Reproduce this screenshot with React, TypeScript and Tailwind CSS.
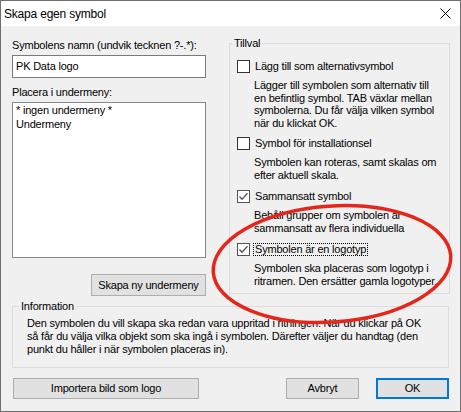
import React from 'react';

const Check = ({ checked }: { checked?: boolean }) => (
  <span
    className={`w-[13px] h-[13px] shrink-0 bg-white border ${checked ? 'border-[#555555]' : 'border-[#333333]'} flex items-center justify-center`}
  >
    {checked && (
      <svg width="11" height="11" viewBox="0 0 11 11">
        <polyline points="1.5,5.5 4,8.2 9.5,2.2" fill="none" stroke="#555555" strokeWidth="1.3" />
      </svg>
    )}
  </span>
);

function Option({
  label,
  lines,
  checked,
  focused,
  className,
}: {
  label: string;
  lines: string[];
  checked?: boolean;
  focused?: boolean;
  className?: string;
}) {
  return (
    <div className={className}>
      <div className="flex items-center h-[13px] gap-[3px]">
        <Check checked={checked} />
        <span
          className={`px-[1px] leading-[11px] ${focused ? 'border border-dotted border-black' : 'border border-transparent'}`}
        >
          {label}
        </span>
      </div>
      <div className="ml-[17px] mt-[6px] leading-[12.5px]">
        {lines.map(l => (
          <div key={l}>{l}</div>
        ))}
      </div>
    </div>
  );
}

export default function App() {
  return (
    <div className="relative w-[461px] h-[412px] bg-[#F0F0F0] border border-[#6F6F6F] flex flex-col text-black text-[11px] tracking-[-0.2px] font-['Liberation_Sans',Arial,sans-serif]">
      {/* title bar */}
      <div className="h-[25px] shrink-0 bg-white flex items-center justify-between pl-[3px] pr-[9px]">
        <span className="text-[12px] tracking-[-0.2px]">Skapa egen symbol</span>
        <svg width="11" height="11" viewBox="0 0 11 11">
          <path d="M0.5 0.5 L10.5 10.5 M10.5 0.5 L0.5 10.5" stroke="#000" strokeWidth="1" />
        </svg>
      </div>

      <div className="flex flex-col pl-[11px] pr-[10px]">
        <div className="flex items-start gap-[23px]">
          {/* left column */}
          <div className="w-[194px] mt-[13px] flex flex-col">
            <div className="h-[13px] leading-[13px]">Symbolens namn (undvik tecknen ?-.*):</div>
            <div className="mt-[3px] h-[23px] bg-white border border-[#7A7A7A] flex items-center pl-[3px]">PK Data logo</div>
            <div className="mt-[8px] h-[13px] leading-[13px]">Placera i undermeny:</div>
            <div className="mt-[3px] h-[156px] bg-white border border-[#828790] pl-[3px] leading-[14px]">
              <div>* ingen undermeny *</div>
              <div>Undermeny</div>
            </div>
            <div className="mt-[16px] self-end w-[115px] h-[22px] bg-[#E1E1E1] border border-[#ADADAD] flex items-center justify-center">
              Skapa ny undermeny
            </div>
          </div>

          {/* Tillval */}
          <div className="relative mt-[17px] w-[221px] h-[251px] border border-[#DCDCDC] pt-[16px] pl-[7px]">
            <span className="absolute -top-[7px] left-[2px] px-[2px] bg-[#F0F0F0] leading-[13px]">Tillval</span>
            <Option
              label="Lägg till som alternativsymbol"
              lines={[
                'Lägger till symbolen som alternativ till',
                'en befintlig symbol. TAB växlar mellan',
                'symbolerna. Du får välja vilken symbol',
                'när du klickat OK.',
              ]}
            />
            <Option
              className="mt-[8px]"
              label="Symbol för installationsel"
              lines={['Symbolen kan roteras, samt skalas om', 'efter aktuell skala.']}
            />
            <Option
              className="mt-[9px]"
              checked
              label="Sammansatt symbol"
              lines={['Behåll grupper om symbolen är', 'sammansatt av flera individuella']}
            />
            <Option
              className="mt-[9px]"
              checked
              focused
              label="Symbolen är en logotyp"
              lines={['Symbolen ska placeras som logotyp i', 'ritramen. Den ersätter gamla logotyper.']}
            />
          </div>
        </div>

        {/* Information */}
        <div className="relative mt-[10px] w-[437px] h-[62px] border border-[#DCDCDC] pt-[10px] pl-[14px] leading-[13px]">
          <span className="absolute -top-[7px] left-[6px] px-[2px] bg-[#F0F0F0] leading-[13px]">Information</span>
          <div>Den symbolen du vill skapa ska redan vara uppritad i ritningen. När du klickar på OK</div>
          <div>så får du välja vilka objekt som ska ingå i symbolen. Därefter väljer du handtag (den</div>
          <div>punkt du håller i när symbolen placeras in).</div>
        </div>

        {/* buttons */}
        <div className="mt-[10px] flex items-center w-[437px]">
          <div className="ml-[1px] w-[186px] h-[21px] bg-[#E1E1E1] border border-[#ADADAD] flex items-center justify-center">
            Importera bild som logo
          </div>
          <div className="ml-auto w-[73px] h-[21px] bg-[#E1E1E1] border border-[#ADADAD] flex items-center justify-center">
            Avbryt
          </div>
          <div className="ml-[17px] w-[73px] h-[21px] bg-[#E1E1E1] border-2 border-[#0078D7] flex items-center justify-center">
            OK
          </div>
        </div>
      </div>

      {/* red annotation */}
      <svg className="absolute -left-[1px] -top-[1px] pointer-events-none" width="461" height="412" viewBox="0 0 461 412">
        <ellipse cx="332" cy="264" rx="119" ry="58" transform="rotate(-4 332 264)" fill="none" stroke="#E5261B" strokeWidth="3.5" />
      </svg>
    </div>
  );
}
